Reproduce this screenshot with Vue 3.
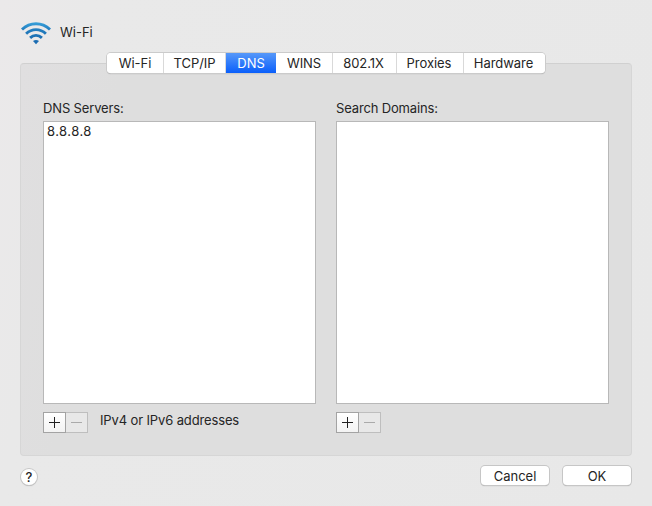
<script setup>
import { ref } from 'vue'

const tabs = [
  { name: 'Wi-Fi', width: 57 },
  { name: 'TCP/IP', width: 62 },
  { name: 'DNS', width: 50 },
  { name: 'WINS', width: 57 },
  { name: '802.1X', width: 64 },
  { name: 'Proxies', width: 67 },
  { name: 'Hardware', width: 81 },
]
const active = ref('DNS')
const lists = [
  { label: 'DNS Servers:', items: ['8.8.8.8'], hint: 'IPv4 or IPv6 addresses' },
  { label: 'Search Domains:', items: [], hint: '' },
]
</script>

<template>
  <main class="window">
    <header class="header">
      <svg class="wifi" width="32" height="24" viewBox="0 0 32 24">
        <defs>
          <linearGradient id="signal" gradientUnits="userSpaceOnUse" x1="0" y1="1" x2="0" y2="23">
            <stop offset="0" stop-color="#3aa3dc" />
            <stop offset=".35" stop-color="#227dbf" />
            <stop offset="1" stop-color="#1965a9" />
          </linearGradient>
        </defs>
        <g fill="none" stroke="url(#signal)" stroke-width="2.9">
          <path d="M2 8.5Q8 2.7 16 2.7T30 8.5" />
          <path d="M6.1 12.7Q10.4 8.6 16 8.6T25.9 12.7" />
          <path d="M10.1 16.9Q12.7 14.4 16 14.4T21.9 16.9" />
        </g>
        <path d="M13 20Q16 18 19 20L16 23.2Z" fill="#1b6cb2" />
      </svg>
      <span class="title">Wi-Fi</span>
    </header>

    <section class="panel">
      <nav class="tabs">
        <button
          v-for="tab in tabs"
          :key="tab.name"
          class="tab"
          :class="{ active: tab.name === active }"
          :style="{ width: tab.width + 'px' }"
          @click="active = tab.name"
        >{{ tab.name }}</button>
      </nav>
      <div class="columns">
        <div v-for="list in lists" :key="list.label" class="column">
          <div class="label">{{ list.label }}</div>
          <div class="list">
            <div v-for="item in list.items" :key="item" class="item">{{ item }}</div>
          </div>
          <div class="controls">
            <button class="square">
              <svg width="11" height="11" viewBox="0 0 11 11"><path d="M0 5.5H11M5.5 0V11" /></svg>
            </button>
            <button class="square disabled" disabled>
              <svg width="11" height="11" viewBox="0 0 11 11"><path d="M0 5.5H11" /></svg>
            </button>
            <span class="hint">{{ list.hint }}</span>
          </div>
        </div>
      </div>
    </section>

    <footer class="footer">
      <button class="help">?</button>
      <button class="push cancel">Cancel</button>
      <button class="push">OK</button>
    </footer>
  </main>
</template>

<style>
body {
  margin: 0;
}
</style>

<style scoped>
.window {
  box-sizing: border-box;
  display: flex;
  flex-direction: column;
  width: 652px;
  height: 506px;
  padding: 0 20px;
  overflow: hidden;
  background: linear-gradient(100deg, #ebe9ea 0, #e9e9e9 12%, #e8e8e8 100%);
  color: #252525;
  font: 13px/16px Inter, "Liberation Sans", sans-serif;
}
button {
  box-sizing: border-box;
  margin: 0;
  padding: 0;
  border: 0;
  color: inherit;
  font: inherit;
  letter-spacing: inherit;
}
.header {
  display: flex;
  align-items: center;
  gap: 8px;
  height: 24px;
  padding-top: 21px;
  margin-bottom: 18px;
}
.wifi {
  display: block;
}
.title {
  padding-bottom: 2px;
}
.panel {
  box-sizing: border-box;
  height: 393px;
  border: 1px solid #d6d6d6;
  border-top-color: #d0d0d0;
  border-radius: 4px;
  background: linear-gradient(100deg, #e0dfe0, #dedede 15%, #dedede);
}
.tabs {
  display: flex;
  width: 438px;
  height: 20px;
  margin: -11px auto 0;
  overflow: hidden;
  border-radius: 4px;
  background: #fff;
  box-shadow: 0 0 0 1px #cbcbcb, 0 1px 1px #999;
}
.tab {
  height: 20px;
  background: #fff;
  border-right: 1px solid #d9d9d9;
  letter-spacing: -0.05px;
}
.tab:nth-child(n + 5) {
  padding-right: 2px;
}
.tab:last-child {
  border-right: 0;
}
.tab.active {
  border: 0;
  background: linear-gradient(#5698f9, #0a5ffb);
  color: #fff;
}
.columns {
  display: flex;
  gap: 20px;
  padding: 27px 22px 0;
}
.column {
  width: 273px;
}
.label {
  height: 21px;
  letter-spacing: -0.15px;
}
.list {
  box-sizing: border-box;
  height: 283px;
  padding: 1px 3px;
  border: 1px solid #b8b8b8;
  background: #fff;
}
.item {
  letter-spacing: 0.45px;
}
.controls {
  display: flex;
  padding-top: 8px;
}
.square {
  display: grid;
  place-items: center;
  width: 23px;
  height: 21px;
  border: 1px solid #a3a3a3;
  background: linear-gradient(#fff, #f3f3f3);
}
.square path {
  stroke: #202020;
  stroke-width: 1;
}
.square.disabled {
  width: 22px;
  border-color: #bebebe;
  border-left: 0;
  background: #e8e8e8;
}
.square.disabled path {
  stroke: #aaa;
}
.hint {
  margin-left: 12px;
  letter-spacing: -0.13px;
}
.footer {
  display: flex;
  align-items: flex-start;
  padding: 10px 1px 0;
}
.help {
  width: 16px;
  height: 16px;
  margin-top: 3px;
  border-radius: 50%;
  background: #fff;
  box-shadow: 0 0 0 1px #c6c6c6, 0 1px 1px #aaa;
  font-weight: 500;
}
.push {
  width: 68px;
  height: 19px;
  border-radius: 4px;
  background: #fff;
  box-shadow: 0 0 0 1px #c6c6c6, 0 1px 1px #999;
}
.cancel {
  margin-left: auto;
  margin-right: 14px;
}
</style>
